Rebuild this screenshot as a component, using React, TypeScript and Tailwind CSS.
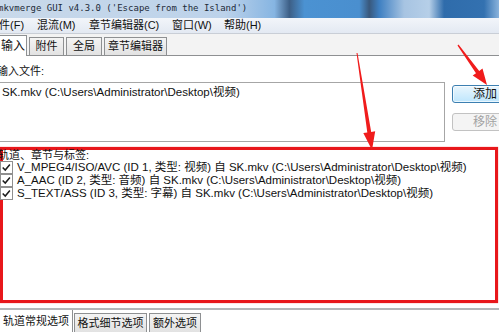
import React from "react";

// mkvmerge GUI window, input tab, with two red annotation arrows on top.
const cjk = "font-['Liberation_Sans','Noto_Sans_CJK_SC',sans-serif]";

const menus = [
  { label: "件(F)", w: "w-[38px]" },
  { label: "混流(M)", w: "w-[52px]" },
  { label: "章节编辑器(C)", w: "w-[83px]" },
  { label: "窗口(W)", w: "w-[52px]" },
  { label: "帮助(H)", w: "w-[60px]" },
];
const topTabs = [
  { label: "附件", w: "w-[35px]" },
  { label: "全局", w: "w-[36px]" },
  { label: "章节编辑器", w: "w-[63px]" },
];
const tracks = [
  "V_MPEG4/ISO/AVC (ID 1, 类型: 视频) 自 SK.mkv (C:\\Users\\Administrator\\Desktop\\视频)",
  "A_AAC (ID 2, 类型: 音频) 自 SK.mkv (C:\\Users\\Administrator\\Desktop\\视频)",
  "S_TEXT/ASS (ID 3, 类型: 字幕) 自 SK.mkv (C:\\Users\\Administrator\\Desktop\\视频)",
];

function Check() {
  return (
    <div className="relative ml-[-3px] h-[13px] w-[13px] shrink-0 border border-[#8f8f8f] bg-white">
      <svg viewBox="0 0 13 13" className="absolute inset-0 h-full w-full">
        <path d="M2 6.5 L5 9.5 L10.5 3" fill="none" stroke="#1c1c1c" strokeWidth="1.8" />
      </svg>
    </div>
  );
}

export default function App() {
  return (
    <div className={`relative h-[332px] w-[499px] overflow-hidden bg-white text-[#111] ${cjk}`}>
      <div className="flex h-[18px] items-center bg-[linear-gradient(90deg,#c9d9ea_0%,#bcd2ea_45%,#86b5e2_55%,#3d5f86_58%,#4b92d2_61%,#4a8fcf_72%,#39587c_74%,#3f80c2_76%,#a7c4e2_81%,#b6cfe8_86%,#2f6cab_89%,#3371b0_97%,#8ab3dc_100%)]">
        <span className="ml-[-2px] whitespace-nowrap font-['DejaVu_Sans_Mono',monospace] text-[9px] text-[#1d2a38]">
          mkvmerge GUI v4.3.0 ('Escape from the Island')
        </span>
      </div>

      <div className="flex h-[16px] items-center border-b border-[#c9ced6] bg-[linear-gradient(#f2f5fa,#e3e9f2)] text-[11px] leading-none">
        {menus.map((m, i) => (
          <span key={m.label} className={`${m.w} shrink-0 whitespace-nowrap ${i === 0 ? "ml-[-1px]" : ""}`}>
            {m.label}
          </span>
        ))}
      </div>

      <div className="flex h-[22px] items-end border-b border-[#8e9092] bg-[#f3f3f3]">
        <div className="relative z-10 mb-[-1px] flex h-[21px] w-[27px] shrink-0 items-center justify-end border-r border-t border-[#8e9092] bg-white pr-[1px] text-[12px]">
          <span className="ml-[-6px] whitespace-nowrap">输入</span>
        </div>
        {topTabs.map((t) => (
          <div
            key={t.label}
            className={`${t.w} ml-[2px] flex h-[18px] shrink-0 items-center justify-center border border-b-0 border-[#8e9092] bg-[linear-gradient(#f4f4f4,#e2e2e2)] text-[11px]`}
          >
            {t.label}
          </div>
        ))}
      </div>

      <div className="flex flex-col">
        <div className="ml-[-3px] mt-[9px] text-[11px] leading-[12px]">输入文件:</div>
        <div className="mt-[5px] flex items-start">
          <div className="h-[60px] w-[445px] shrink-0 border border-l-0 border-[#a6a6a6] bg-white pl-[2px] pt-[2px] text-[11.5px] leading-[15px]">
            SK.mkv (C:\Users\Administrator\Desktop\视频)
          </div>
          <div className="ml-[7px] mt-[3px] flex shrink-0 flex-col gap-[10px]">
            <div className="flex h-[18px] w-[66px] items-center justify-center rounded-[3px] border border-[#3c7fb1] bg-[linear-gradient(#eaf6fd,#bee6fd)] text-[12px] shadow-[inset_0_0_0_1px_#ffffffaa]">
              添加
            </div>
            <div className="flex h-[18px] w-[66px] items-center justify-center rounded-[3px] border border-[#c2c2c2] bg-[#f4f4f4] text-[12px] text-[#a2a2a2]">
              移除
            </div>
          </div>
        </div>

        <div className="mt-[5px] h-[156px] w-[498px] border-[3px] border-[#e8171b] shadow-[0_0_1px_#ff6060]">
          <div className="ml-[-5px] text-[11px] leading-[11px]">轨道、章节与标签:</div>
          <div className="flex flex-col">
            {tracks.map((t) => (
              <div key={t} className="flex h-[13px] items-center gap-[4px] text-[11.5px]">
                <Check />
                <span className="whitespace-nowrap">{t}</span>
              </div>
            ))}
          </div>
        </div>

        <div className="mt-[5px] h-[2px] w-full bg-[#b4b6b8]" />
        <div className="mt-[1px] flex h-[22px] items-end border-b border-[#a0a0a0] bg-white">
          <div className="flex h-[22px] w-[73px] shrink-0 items-center justify-center border-r border-[#8e9092] bg-white text-[11px]">
            轨道常规选项
          </div>
          <div className="ml-[1px] flex h-[19px] w-[73px] shrink-0 items-center justify-center border border-b-0 border-[#8e9092] bg-[linear-gradient(#f4f4f4,#e2e2e2)] text-[11px]">
            格式细节选项
          </div>
          <div className="ml-[2px] flex h-[19px] w-[52px] shrink-0 items-center justify-center border border-b-0 border-[#8e9092] bg-[linear-gradient(#f4f4f4,#e2e2e2)] text-[11px]">
            额外选项
          </div>
        </div>
      </div>

      <svg className="pointer-events-none absolute inset-0" width="499" height="332" viewBox="0 0 499 332">
        <polygon
          fill="#f01c1c"
          points="356.5,53.1 357.5,52.9 371.2,131.9 375.2,131.3 372,150 363.3,133.1 367.3,132.5"
        />
        <polygon
          fill="#f01c1c"
          points="457.5,45.4 458.5,44.6 479.2,70.9 482.5,68.5 487,85 472.7,75.5 476,73.2"
        />
      </svg>
    </div>
  );
}
